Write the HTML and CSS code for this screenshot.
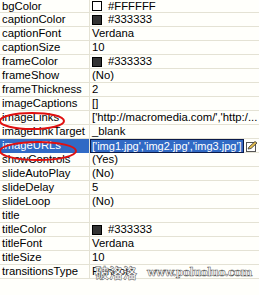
FILE: index.html
```html
<!DOCTYPE html>
<html>
<head>
<meta charset="utf-8">
<link rel="stylesheet" href="styles.css">
</head>
<body>
<div class="panel">
  <div class="grid">
    <div class="row first"><div class="k">bgColor</div><div class="v"><span class="sw white"></span>#FFFFFF</div></div>
    <div class="row"><div class="k">captionColor</div><div class="v"><span class="sw dark"></span>#333333</div></div>
    <div class="row"><div class="k">captionFont</div><div class="v">Verdana</div></div>
    <div class="row"><div class="k">captionSize</div><div class="v">10</div></div>
    <div class="row"><div class="k">frameColor</div><div class="v"><span class="sw dark"></span>#333333</div></div>
    <div class="row"><div class="k">frameShow</div><div class="v">(No)</div></div>
    <div class="row"><div class="k">frameThickness</div><div class="v">2</div></div>
    <div class="row"><div class="k">imageCaptions</div><div class="v">[]</div></div>
    <div class="row"><div class="k">imageLinks</div><div class="v">['http://macromedia.com/','http:/...</div></div>
    <div class="row"><div class="k">imageLinkTarget</div><div class="v">_blank</div></div>
    <div class="row sel"><div class="k">imageURLs</div><div class="v"><span class="edit"><span class="seltext">['img1.jpg','img2.jpg','img3.jpg']</span></span><span class="btn"><svg width="12" height="11" viewBox="0 0 12 11"><rect x="0.5" y="1.5" width="9" height="9" fill="#fff" stroke="#555"/><path d="M2 8 L3 6 L9 0.5 L11 2 L5 7.5 Z" fill="#e8c050" stroke="#333" stroke-width="0.8"/></svg></span></div></div>
    <div class="row"><div class="k">showControls</div><div class="v">(Yes)</div></div>
    <div class="row"><div class="k">slideAutoPlay</div><div class="v">(No)</div></div>
    <div class="row"><div class="k">slideDelay</div><div class="v">5</div></div>
    <div class="row"><div class="k">slideLoop</div><div class="v">(No)</div></div>
    <div class="row"><div class="k">title</div><div class="v"></div></div>
    <div class="row"><div class="k">titleColor</div><div class="v"><span class="sw dark"></span>#333333</div></div>
    <div class="row"><div class="k">titleFont</div><div class="v">Verdana</div></div>
    <div class="row"><div class="k">titleSize</div><div class="v">10</div></div>
    <div class="row"><div class="k">transitionsType</div><div class="v">Random</div></div>
  </div>
  <svg class="marks" width="90" height="60" viewBox="0 0 90 60">
    <ellipse cx="32" cy="10" rx="32" ry="8" fill="none" stroke="#e01010" stroke-width="2"/>
    <ellipse cx="38" cy="40" rx="38" ry="9" fill="none" stroke="#e01010" stroke-width="2"/>
  </svg>
  <div class="wm"><span class="cn">破洛洛</span><span class="url">www.poluoluo.com</span></div>
</div>
</body>
</html>
```
FILE: styles.css
```css
html, body {
  margin: 0;
  padding: 0;
  background: #fffffb;
}
.panel {
  position: relative;
  width: 259px;
  height: 295px;
  overflow: hidden;
  font-family: "Liberation Sans", Arial, sans-serif;
  font-size: 11.3px;
  color: #000;
}
.row {
  display: grid;
  grid-template-columns: 90px 1fr;
  height: 14px;
  border-bottom: 1px solid #e4e2d4;
  box-sizing: border-box;
  line-height: 13px;
}
.row.first {
  height: 13px;
  line-height: 12px;
}
.k {
  padding-left: 2px;
  border-right: 1px solid #e4e2d4;
  white-space: nowrap;
  overflow: hidden;
}
.v {
  padding-left: 2px;
  white-space: nowrap;
  display: flex;
  align-items: center;
  overflow: hidden;
}
.sw {
  display: inline-block;
  flex: none;
  width: 10px;
  height: 10px;
  border: 1px solid #000;
  margin-right: 6px;
  box-sizing: border-box;
}
.sw.white { background: #fff; }
.sw.dark { background: #333; }
.sel .k {
  background: #316ac5;
  color: #fff;
}
.sel .v {
  padding-left: 0;
  overflow: visible;
}
.edit {
  display: flex;
  align-items: center;
  flex: none;
  width: 154px;
  height: 14px;
  border: 1px solid #0a1a4a;
  box-sizing: border-box;
  background: #fff;
  overflow: hidden;
}
.seltext {
  background: #316ac5;
  color: #fff;
  padding: 0 1px;
  font-size: 11px;
  line-height: 12px;
}
.btn {
  margin-left: 2px;
  display: flex;
  align-items: center;
}
.marks {
  position: absolute;
  left: 0;
  top: 111px;
}
.wm {
  position: absolute;
  left: 95px;
  top: 262px;
  display: flex;
  align-items: center;
  gap: 10px;
  color: #fff;
  -webkit-text-stroke: 0.5px #555;
  font-family: "Noto Sans CJK SC", "DejaVu Sans", sans-serif;
  font-weight: bold;
}
.wm .cn { font-size: 14px; }
.wm .url { font-size: 11px; font-family: "DejaVu Serif", serif; letter-spacing: -0.6px; }
```
